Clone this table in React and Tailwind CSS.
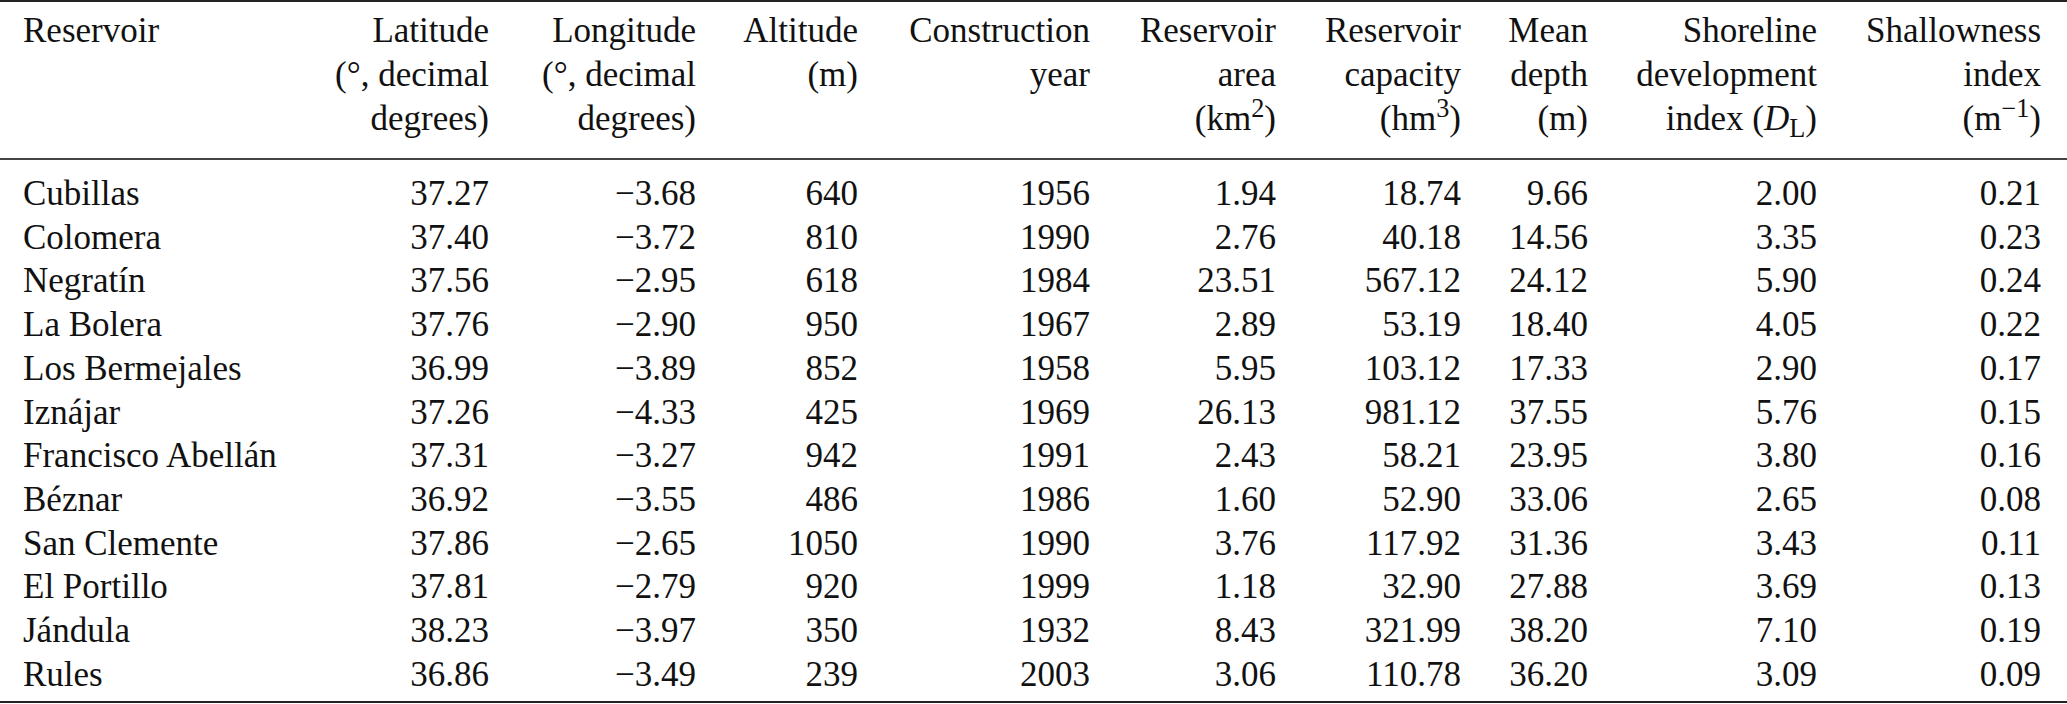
const rows = [
  ["Cubillas", "37.27", "−3.68", "640", "1956", "1.94", "18.74", "9.66", "2.00", "0.21"],
  ["Colomera", "37.40", "−3.72", "810", "1990", "2.76", "40.18", "14.56", "3.35", "0.23"],
  ["Negratín", "37.56", "−2.95", "618", "1984", "23.51", "567.12", "24.12", "5.90", "0.24"],
  ["La Bolera", "37.76", "−2.90", "950", "1967", "2.89", "53.19", "18.40", "4.05", "0.22"],
  ["Los Bermejales", "36.99", "−3.89", "852", "1958", "5.95", "103.12", "17.33", "2.90", "0.17"],
  ["Iznájar", "37.26", "−4.33", "425", "1969", "26.13", "981.12", "37.55", "5.76", "0.15"],
  ["Francisco Abellán", "37.31", "−3.27", "942", "1991", "2.43", "58.21", "23.95", "3.80", "0.16"],
  ["Béznar", "36.92", "−3.55", "486", "1986", "1.60", "52.90", "33.06", "2.65", "0.08"],
  ["San Clemente", "37.86", "−2.65", "1050", "1990", "3.76", "117.92", "31.36", "3.43", "0.11"],
  ["El Portillo", "37.81", "−2.79", "920", "1999", "1.18", "32.90", "27.88", "3.69", "0.13"],
  ["Jándula", "38.23", "−3.97", "350", "1932", "8.43", "321.99", "38.20", "7.10", "0.19"],
  ["Rules", "36.86", "−3.49", "239", "2003", "3.06", "110.78", "36.20", "3.09", "0.09"],
];

const headers = [
  ["Reservoir"],
  ["Latitude", "(°, decimal", "degrees)"],
  ["Longitude", "(°, decimal", "degrees)"],
  ["Altitude", "(m)"],
  ["Construction", "year"],
  ["Reservoir", "area", <>(km<sup>2</sup>)</>],
  ["Reservoir", "capacity", <>(hm<sup>3</sup>)</>],
  ["Mean", "depth", "(m)"],
  ["Shoreline", "development", <>index (<i>D</i><sub className="not-italic">L</sub>)</>],
  ["Shallowness", "index", <>(m<sup>−1</sup>)</>],
];

const cols =
  "grid grid-cols-[300px_166px_207px_162px_232px_186px_185px_127px_229px_224px] pl-[23px]";

export default function App() {
  return (
    <div className="flex h-[704px] w-[2067px] flex-col bg-white font-['Liberation_Serif',serif] text-[35px] text-[#111]">
      <div className="h-[2px] bg-[#222]" />

      <div className={`${cols} pt-[7px] pb-[17px] leading-[44px]`}>
        {headers.map((lines, i) => (
          <div key={i} className={i === 0 ? "text-left" : "text-right"}>
            {lines.map((line, j) => (
              <div key={j}>{line}</div>
            ))}
          </div>
        ))}
      </div>

      <div className="h-[2px] bg-[#444]" />

      <div className={`${cols} pt-[12px] leading-[43.7px]`}>
        {rows.map((row) =>
          row.map((cell, i) => (
            <div key={row[0] + i} className={i === 0 ? "text-left" : "text-right"}>
              {cell}
            </div>
          ))
        )}
      </div>

      <div className="mt-auto mb-[1px] h-[2px] bg-[#222]" />
    </div>
  );
}
